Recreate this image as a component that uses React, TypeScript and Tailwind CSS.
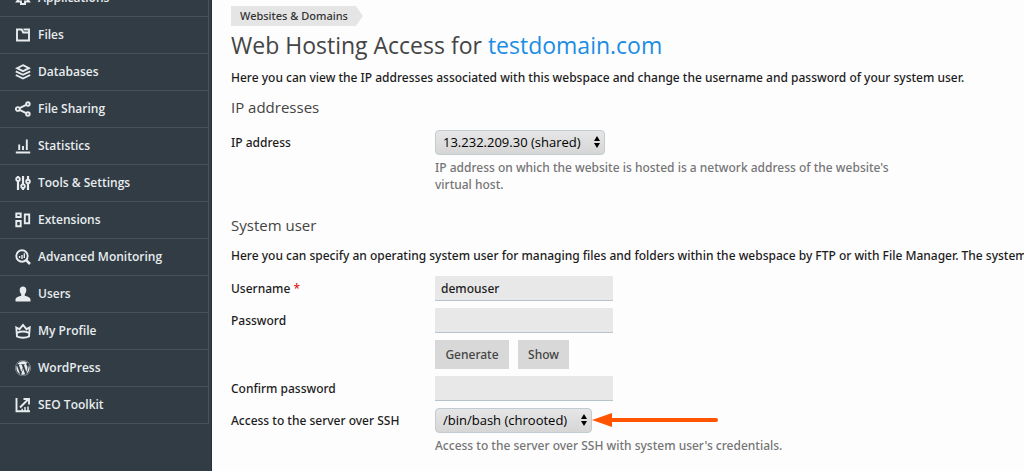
import React from 'react';
import { FaWordpress } from 'react-icons/fa';

interface MenuItem {
  label: string;
  icon: React.ReactNode;
}

const stroke = { fill: 'none', stroke: 'currentColor', strokeWidth: 1.9 };

const menu: MenuItem[] = [
  {
    label: 'Applications',
    icon: (
      <g {...stroke}>
        <path d="M3.500 1.500v8L2 11.500h4V14h4v-2.500h4l-1.500-2v-8z" />
      </g>
    ),
  },
  {
    label: 'Files',
    icon: (
      <g {...stroke}>
        <path d="M2 2.500h4.700L8.200 5.500h5.800v8H2z" />
        <path d="M8.500 2.500h5.500v3.500" />
      </g>
    ),
  },
  {
    label: 'Databases',
    icon: (
      <g {...stroke}>
        <path d="M8 1.200 14 4.200 8 7.200 2 4.200z" />
        <path d="M.8 7.300 8 10.800l7.200-3.500M.8 11 8 14.500l7.200-3.500" />
      </g>
    ),
  },
  {
    label: 'File Sharing',
    icon: (
      <g {...stroke}>
        <circle cx="2.800" cy="8" r="1.900" />
        <circle cx="12.900" cy="3" r="1.800" />
        <circle cx="12.900" cy="13" r="1.800" />
        <path d="M4.500 7.100 11.200 3.800M4.500 8.900l6.700 3.300" />
      </g>
    ),
  },
  {
    label: 'Statistics',
    icon: (
      <g {...stroke}>
        <path d="M.8 14.500h14.400M4.200 12V6.500M8 12V8M11.800 12V1.500" />
      </g>
    ),
  },
  {
    label: 'Tools & Settings',
    icon: (
      <g {...stroke}>
        <path d="M3 1v1.500M3 6v9M8 1v8M8 13v2M13 1v3.500M13 8.500V15" strokeWidth="2.200" />
        <circle cx="3" cy="4.200" r="1.800" />
        <circle cx="8" cy="11.200" r="1.800" />
        <circle cx="13" cy="6.500" r="1.800" />
      </g>
    ),
  },
  {
    label: 'Extensions',
    icon: (
      <g {...stroke}>
        <path d="M1.300 1.500h4.400v3.500H1.300zM1.300 9h4.400v5.300H1.300zM9.800 2.500h4.400v8.700H9.800z" />
      </g>
    ),
  },
  {
    label: 'Advanced Monitoring',
    icon: (
      <g {...stroke}>
        <circle cx="7" cy="7" r="5.700" />
        <path d="M11 11l4 4" strokeWidth="2.500" />
        <path d="M4.600 9V7M7 10V6M9.300 9V4.200" strokeWidth="1.400" />
      </g>
    ),
  },
  {
    label: 'Users',
    icon: (
      <path
        fill="currentColor"
        d="M8 .5c2 0 3.300 1.400 3.300 3.400 0 2-.8 3.400-1.500 4.200v1.700c1.800.7 5.700 1.300 5.700 4v1.700H.5v-1.700c0-2.700 3.900-3.300 5.700-4V8.100C5.500 7.300 4.700 5.900 4.700 3.900 4.700 1.900 6 .5 8 .5z"
      />
    ),
  },
  {
    label: 'My Profile',
    icon: (
      <g {...stroke}>
        <path d="M1.300 4.500 4.500 6.200 8 2l3.500 4.200 3.200-1.700-.7 9c-3 1.700-9 1.700-12 0z" />
        <path d="M2 9.800c3.500-1.600 8.500-1.600 12 0" />
      </g>
    ),
  },
  {
    label: 'WordPress',
    icon: <FaWordpress size={16} />,
  },
  {
    label: 'SEO Toolkit',
    icon: (
      <g {...stroke}>
        <path d="M1.500 1v13.300H15" />
        <path d="M5 10.500 13 2.500M8.500 2h5.500v5.500" />
        <path d="M7.200 14v-2.200M10 14v-4M13 14V9.500" strokeWidth="1.500" />
      </g>
    ),
  },
];

function Sidebar() {
  return (
    <nav className="w-[212px] shrink-0 overflow-hidden border-r border-[#26323a] bg-[#313c45] pr-0.5 font-['Open_Sans',sans-serif]">
      <ul className="-mt-5 border-r border-[#46545d]">
        {menu.map((item) => (
          <li key={item.label} className="border-b border-[#45525b]">
            <a
              href="#"
              className="flex h-9 items-center gap-[7px] pl-[15px] text-xs font-semibold text-[#e8ecee]"
            >
              <svg viewBox="0 0 16 16" className="size-4 shrink-0" aria-hidden="true">
                {item.icon}
              </svg>
              {item.label}
            </a>
          </li>
        ))}
      </ul>
    </nav>
  );
}

interface SelectProps {
  id: string;
  value: string;
}

function Select({ id, value }: SelectProps) {
  return (
    <div className="relative">
      <select
        id={id}
        className="block h-[25px] appearance-none rounded border border-[#c3ccd0] bg-linear-to-b from-[#e6e6e6] to-[#d6d6d6] pr-[23px] pl-[7px] font-['Open_Sans',sans-serif] text-[13px] font-medium text-black"
      >
        <option>{value}</option>
      </select>
      <svg
        viewBox="0 0 6 12"
        className="pointer-events-none absolute top-1.5 right-[5px] h-3 w-1.5"
        aria-hidden="true"
      >
        <path d="M3 0l3 5H0zM3 12l3-5H0z" />
      </svg>
    </div>
  );
}

interface RowProps {
  label: string;
  htmlFor: string;
  required?: boolean;
  hint?: string;
  children: React.ReactNode;
}

function Row({ label, htmlFor, required = false, hint, children }: RowProps) {
  return (
    <div className="flex">
      <label htmlFor={htmlFor} className="w-[204px] shrink-0 leading-[25px]">
        {label}
        {required && <span className="text-[#e02020]"> *</span>}
      </label>
      <div className="max-w-[480px]">
        <div className="flex">{children}</div>
        {hint && <p className="mt-1 leading-[17px] text-[#757575]">{hint}</p>}
      </div>
    </div>
  );
}

const inputClass = 'block h-[25px] w-[178px] border-b border-[#b4c3cc] bg-[#e8e8e8] px-1.5 outline-none';
const buttonClass = 'h-[29px] bg-[#d8d8d8] text-[#444]';
const headingClass = "font-['Open_Sans',sans-serif] font-normal text-[#444]";

export default function App() {
  return (
    <div className="flex h-screen overflow-hidden bg-[#fdfdfd] font-['Noto_Sans','Open_Sans',sans-serif] text-xs font-medium text-[#1c1c1c]">
      <Sidebar />
      <main className="min-w-0 flex-1 overflow-hidden pt-1.5 pl-[19px]">
        <a
          href="#"
          className="block h-5 w-fit bg-[#e5e5e5] pr-[15px] pl-[9px] text-[11px] leading-5 text-[#333] [clip-path:polygon(0_0,calc(100%-7px)_0,100%_50%,calc(100%-7px)_100%,0_100%)]"
        >
          Websites &amp; Domains
        </a>

        <h1 className={`${headingClass} mt-[3px] text-[23px] leading-8`}>
          Web Hosting Access for <span className="text-[#1b8de4]">testdomain.com</span>
        </h1>
        <p className="mt-[7px] leading-5">
          Here you can view the IP addresses associated with this webspace and change the username and
          password of your system user.
        </p>

        <section>
          <h2 className={`${headingClass} mt-[9px] mb-[13px] text-[15px] leading-5`}>IP addresses</h2>
          <Row
            label="IP address"
            htmlFor="ip"
            hint="IP address on which the website is hosted is a network address of the website's virtual host."
          >
            <Select id="ip" value="13.232.209.30 (shared)" />
          </Row>
        </section>

        <section>
          <h2 className={`${headingClass} mt-[22px] text-[15px] leading-5`}>System user</h2>
          <p className="mt-[11px] mb-[10px] leading-5 whitespace-nowrap">
            Here you can specify an operating system user for managing files and folders within the webspace
            by FTP or with File Manager. The system
          </p>
          <form className="flex flex-col gap-[7px]">
            <Row label="Username" htmlFor="username" required>
              <input id="username" type="text" defaultValue="demouser" className={inputClass} />
            </Row>
            <Row label="Password" htmlFor="password">
              <div>
                <input id="password" type="password" className={inputClass} />
                <div className="mt-[7px] flex gap-[9px]">
                  <button type="button" className={`${buttonClass} w-[74px]`}>
                    Generate
                  </button>
                  <button type="button" className={`${buttonClass} w-[51px]`}>
                    Show
                  </button>
                </div>
              </div>
            </Row>
            <Row label="Confirm password" htmlFor="confirm">
              <input id="confirm" type="password" className={inputClass} />
            </Row>
            <Row
              label="Access to the server over SSH"
              htmlFor="ssh"
              hint="Access to the server over SSH with system user's credentials."
            >
              <div className="relative">
                <Select id="ssh" value="/bin/bash (chrooted)" />
                <svg
                  viewBox="0 0 128 16"
                  className="absolute top-1 left-full h-4 w-32 text-[#ff5500]"
                  aria-hidden="true"
                >
                  <path d="M0 8 20 1v14z" fill="currentColor" />
                  <path d="M18 8h106" stroke="currentColor" strokeWidth="4" strokeLinecap="round" />
                </svg>
              </div>
            </Row>
          </form>
        </section>
      </main>
    </div>
  );
}
